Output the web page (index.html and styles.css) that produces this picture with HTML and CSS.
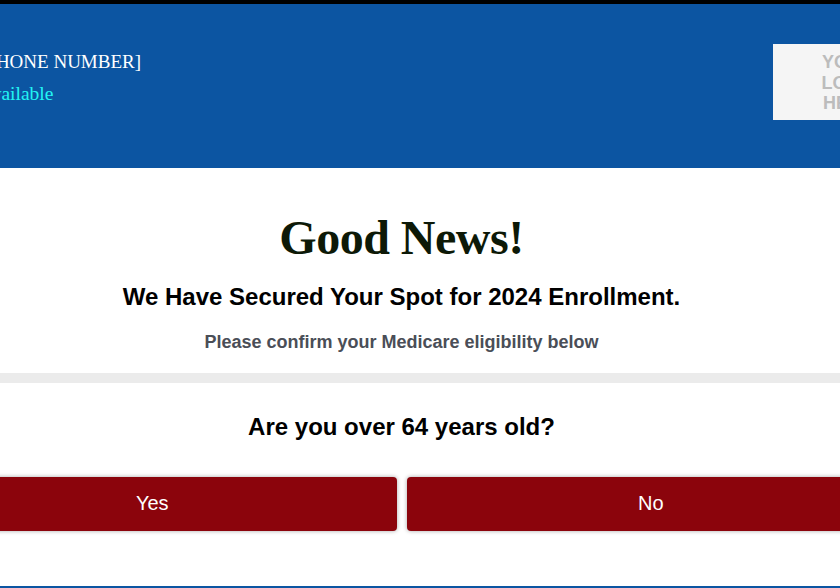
FILE: index.html
```html
<!DOCTYPE html>
<html lang="en">
<head>
  <meta charset="UTF-8">
  <meta name="viewport" content="width=device-width, initial-scale=1.0">
  <title>Good News! - 2024 Enrollment</title>
  <link rel="stylesheet" href="styles.css">
</head>
<body>
  <header class="top-bar">
    <div class="top-inner">
      <div class="contact">
        <p class="phone">[PHONE NUMBER]</p>
        <p class="agents">Available</p>
      </div>
      <div class="logo">YOUR<br>LOGO<br>HERE</div>
    </div>
  </header>

  <main>
    <section class="intro">
      <div class="wrap">
        <h1>Good News!</h1>
        <h2>We Have Secured Your Spot for 2024 Enrollment.</h2>
        <p class="note">Please confirm your Medicare eligibility below</p>
      </div>
    </section>

    <div class="divider"></div>

    <section class="question">
      <div class="wrap">
        <h3>Are you over 64 years old?</h3>
        <div class="choices">
          <button type="button" class="choice">Yes</button>
          <button type="button" class="choice">No</button>
        </div>
      </div>
    </section>
  </main>

  <footer class="site-footer"></footer>
</body>
</html>
```

FILE: styles.css
```css
* {
  margin: 0;
  padding: 0;
  box-sizing: border-box;
}

body {
  font-family: "Liberation Sans", Arial, sans-serif;
  background-color: white;
  overflow: hidden;
}

.top-bar {
  background-color: #0c55a2;
  border-top: 4px solid black;
  height: 168px;
  padding-top: 40px;
}

.top-inner {
  display: flex;
  justify-content: space-between;
  align-items: flex-start;
  width: 944px;
  margin-left: -21px;
}

.contact {
  font-family: "Liberation Serif", Georgia, serif;
  padding-top: 4px;
}

.phone {
  color: white;
  font-size: 19px;
  line-height: 28px;
}

.agents {
  color: #22f3f3;
  font-size: 19.5px;
  line-height: 28px;
  margin-top: 4px;
}

.logo {
  width: 150px;
  height: 76px;
  background-color: #f5f5f5;
  color: #bcbcbc;
  font-weight: bold;
  font-size: 18px;
  line-height: 20.5px;
  text-align: center;
  padding-top: 8px;
}

.wrap {
  width: 987px;
  margin-left: -92px;
  text-align: center;
}

.intro {
  padding: 41px 0 19px;
}

h1 {
  font-family: "Liberation Serif", Georgia, serif;
  font-size: 48px;
  font-weight: bold;
  line-height: 1.2;
  letter-spacing: -0.5px;
  color: #0d1907;
}

h2 {
  margin-top: 16px;
  font-size: 24px;
  line-height: 1.2;
  color: black;
}

.note {
  margin-top: 21px;
  font-size: 18px;
  font-weight: bold;
  line-height: 1.2;
  color: #4a4e57;
}

.divider {
  height: 10px;
  background-color: #ebebeb;
}

.question {
  padding: 30px 0 55px;
}

h3 {
  font-size: 24px;
  line-height: 1.2;
  color: black;
}

.choices {
  display: flex;
  gap: 10px;
  margin-top: 35px;
}

.choice {
  flex: 1;
  height: 54px;
  background-color: #8b040c;
  color: white;
  font-family: "Liberation Sans", Arial, sans-serif;
  font-size: 20px;
  border: none;
  border-radius: 4px;
  box-shadow: 0 0 4px rgba(0, 0, 0, 0.35);
  cursor: pointer;
}

.site-footer {
  height: 40px;
  background-color: #0c55a2;
}
```
